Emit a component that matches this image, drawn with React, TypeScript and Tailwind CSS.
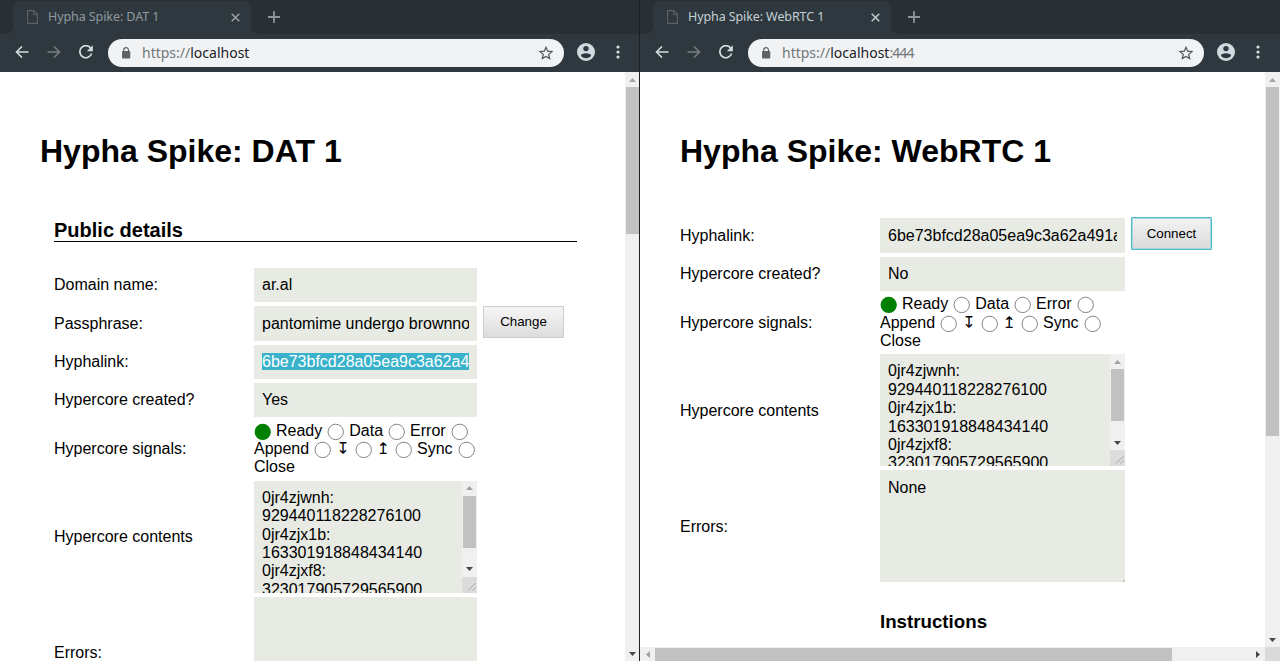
import type { ReactNode } from 'react';

function TabCurve({ flip }: { flip?: boolean }) {
  return (
    <svg width="8" height="8" viewBox="0 0 8 8" className={flip ? 'self-end -scale-x-100' : 'self-end'}>
      <path d="M8 0v8H0c4.400 0 8-3.600 8-8z" fill="#2e383e" />
    </svg>
  );
}

function BrowserChrome({ title, port, active }: { title: string; port?: string; active?: boolean }) {
  return (
    <header className="shrink-0 font-['Noto_Sans','Open_Sans',sans-serif]">
      <div className="flex h-[34px] bg-[#283036] pl-[5px] pt-px">
        <TabCurve />
        <div className="flex w-[238px] items-center rounded-t-[7px] bg-[#2e383e] pb-px pl-[14px] pr-[11px]">
          <svg width="11" height="14" viewBox="0 0 11 14" fill="none" stroke="#5d6264" strokeWidth="1.1" className="shrink-0">
            <path d="M.6.6h6.100l3.700 3.700v9.100H.6zM6.500.6v3.900h3.900" />
          </svg>
          <span
            className={
              active
                ? 'ml-[10px] flex-1 whitespace-nowrap text-[12.5px] leading-[18px] tracking-[-0.1px] text-[#c5d0d5]'
                : 'ml-[10px] flex-1 whitespace-nowrap text-[12.5px] leading-[18px] tracking-[-0.08px] text-[#8f999e]'
            }
          >
            {title}
          </span>
          <svg width="9" height="9" viewBox="0 0 9 9" stroke={active ? '#c2cbd0' : '#9ba3a7'} strokeWidth="1.500">
            <path d="M.7.7l7.600 7.600M8.300.7L.7 8.300" />
          </svg>
        </div>
        <TabCurve flip />
        <svg width="12" height="12" viewBox="0 0 12 12" stroke="#8d9599" strokeWidth="1.800" className="ml-[9px] mt-[10px]">
          <path d="M6 0v12M0 6h12" />
        </svg>
      </div>
      <div className="flex h-[38px] items-center bg-[#2e383e] pl-[15px]">
        <svg width="14" height="12" viewBox="0 0 14 12" fill="none" stroke="#d3dee3" strokeWidth="1.600" className="mb-[2px] shrink-0">
          <path d="M13.500 6H1.500M7 .5L1.500 6 7 11.500" />
        </svg>
        <svg width="14" height="12" viewBox="0 0 14 12" fill="none" stroke="#747d82" strokeWidth="1.600" className="mb-[2px] ml-[18px] shrink-0">
          <path d="M.5 6h12M7 .5L12.500 6 7 11.500" />
        </svg>
        <svg width="14" height="14" viewBox="0 0 14 14" fill="none" className="mb-[2px] ml-[18px] shrink-0">
          <path d="M11.600 3A6 6 0 1 0 12.600 8.500" stroke="#d3dee3" strokeWidth="1.700" />
          <path d="M13.800.2v6H7.800z" fill="#d3dee3" />
        </svg>
        <div className="ml-[15px] flex h-7 w-[456px] items-center rounded-full bg-[#f1f2f4] pl-[13px] pr-[11px]">
          <svg width="10" height="12" viewBox="0 0 10 12" className="shrink-0">
            <rect x="1" y="4" width="8.300" height="7.500" rx="1" fill="#5f6367" />
            <path d="M2.700 4.500V3a2.400 2.400 0 0 1 4.800 0v1.500" fill="none" stroke="#5f6367" strokeWidth="1.200" />
          </svg>
          <span className="ml-[11px] flex-1 whitespace-nowrap text-[14px] leading-[20px] text-[#73777a]">
            https://<span className="text-[#202326]">localhost</span>
            <span className="tracking-[-0.9px]">{port}</span>
          </span>
          <svg width="14" height="14" viewBox="0 0 14 14" fill="none" stroke="#505457" strokeWidth="1.200">
            <path d="M7 1.300l1.700 3.900 4.200.4-3.200 2.800 1 4.200L7 10.400l-3.700 2.200 1-4.200-3.200-2.800 4.200-.4z" />
          </svg>
        </div>
        <svg width="18" height="18" viewBox="0 0 18 18" className="mb-[2px] ml-[13px] shrink-0">
          <circle cx="9" cy="9" r="9" fill="#cfdbe1" />
          <circle cx="9" cy="5.600" r="2.700" fill="#2e383e" />
          <path d="M9 10.300c-2.800 0-5.200 1-5.200 2.300 1.100 1.700 3 2.700 5.200 2.700s4.100-1 5.200-2.700c0-1.300-2.400-2.300-5.200-2.300z" fill="#2e383e" />
        </svg>
        <svg width="4" height="14" viewBox="0 0 4 14" fill="#d3dee3" className="mb-[2px] ml-[21px] shrink-0">
          <circle cx="2" cy="2" r="1.600" />
          <circle cx="2" cy="7" r="1.600" />
          <circle cx="2" cy="12" r="1.600" />
        </svg>
      </div>
    </header>
  );
}

function Arrow({ dir, color }: { dir: 'up' | 'down' | 'left' | 'right'; color: string }) {
  const paths = {
    up: 'M3.500 0L7 4H0z',
    down: 'M3.500 4L7 0H0z',
    left: 'M0 3.500L4 0v7z',
    right: 'M4 3.500L0 0v7z',
  };
  const vertical = dir === 'up' || dir === 'down';
  return (
    <svg width={vertical ? 7 : 4} height={vertical ? 4 : 7} className="shrink-0" fill={color}>
      <path d={paths[dir]} />
    </svg>
  );
}

function VerticalScrollbar({ width, thumb }: { width: string; thumb: string }) {
  return (
    <div className={`${width} flex shrink-0 flex-col items-center bg-[#f0f0f0]`}>
      <div className="flex h-[15px] items-center">
        <Arrow dir="up" color="#a2a2a2" />
      </div>
      <div className={`${thumb} w-[13px] bg-[#c1c1c1]`} />
      <div className="mt-auto flex h-[15px] items-center">
        <Arrow dir="down" color="#484848" />
      </div>
    </div>
  );
}

function Row({ label, height, children }: { label: string; height: string; children: ReactNode }) {
  return (
    <div className={`${height} flex shrink-0`}>
      <div className="flex w-[200px] shrink-0 items-center pt-[0.800px]">{label}</div>
      {children}
    </div>
  );
}

function Field({ width, children }: { width: string; children?: ReactNode }) {
  return (
    <div className={`${width} flex h-full shrink-0 items-center bg-[#e8ebe4] px-2 pt-[0.800px]`}>
      <div className="w-full overflow-hidden whitespace-nowrap">{children}</div>
    </div>
  );
}

function Dot({ on }: { on?: boolean }) {
  return (
    <svg width="17" height="18" viewBox="0 0 17 18" className="mr-[5px] shrink-0 overflow-visible">
      <circle cx="8.700" cy="9.900" r={on ? 8.1 : 7.7} fill={on ? '#008000' : '#fff'} stroke={on ? 'none' : '#858585'} />
    </svg>
  );
}

function Glyph({ children }: { children: string }) {
  return <span className="mr-[5px] w-[13.400px] text-center font-['DejaVu_Sans',sans-serif]">{children}</span>;
}

function Signals() {
  return (
    <div className="flex flex-col whitespace-nowrap pt-[0.500px]">
      <div className="flex h-[18.400px]">
        <Dot on />
        <span className="mr-[5px]">Ready</span>
        <Dot />
        <span className="mr-[5px]">Data</span>
        <Dot />
        <span className="mr-[5px]">Error</span>
        <Dot />
      </div>
      <div className="flex h-[18.400px]">
        <span className="mr-[5px]">Append</span>
        <Dot />
        <Glyph>↧</Glyph>
        <Dot />
        <Glyph>↥</Glyph>
        <Dot />
        <span className="mr-[5px]">Sync</span>
        <Dot />
      </div>
      <div className="h-[18.400px]">Close</div>
    </div>
  );
}

const entries = [
  ['0jr4zjwnh:', '929440118228276100'],
  ['0jr4zjx1b:', '163301918848434140'],
  ['0jr4zjxf8:', '323017905729565900'],
];

function Contents({ width }: { width: string }) {
  return (
    <div className={`${width} flex h-full shrink-0 overflow-hidden bg-[#e8ebe4]`}>
      <div className="flex-1 px-2 pt-2">
        {entries.map(([key, value]) => (
          <div key={key}>
            <div>{key}</div>
            <div>{value}</div>
          </div>
        ))}
      </div>
      <div className="flex w-[15px] flex-col">
        <div className="flex h-[96px]">
          <VerticalScrollbar width="w-[15px]" thumb="h-[52px]" />
        </div>
        <svg width="15" height="16" className="bg-[#dcdcdc]" stroke="#a8a8a8">
          <path d="M6 13.500L13.500 6M10.500 13.500l3-3" />
        </svg>
      </div>
    </div>
  );
}

function Button({ focused, children }: { focused?: boolean; children: ReactNode }) {
  return (
    <button
      className={
        focused
          ? '-mt-px ml-[6px] h-[33px] w-[81px] rounded-[1px] border border-[#4bbacb] bg-linear-to-b from-[#f3f3f3] to-[#dadada] text-[13.333px] leading-4 shadow-[inset_0_0_0_1px_#a6d7df]'
          : 'ml-[6px] h-[32px] w-[81px] border border-[#cdcdcd] bg-linear-to-b from-[#f5f5f5] to-[#dddddd] text-[13.333px] leading-4'
      }
    >
      {children}
    </button>
  );
}

export default function App() {
  return (
    <div className="flex h-[661px] w-[1280px] overflow-hidden bg-white font-['Liberation_Sans',Arial,sans-serif] text-[16px] leading-[18.400px] text-black">
      <section className="flex w-[640px] flex-col border-r border-[#1c2022]">
        <BrowserChrome title="Hypha Spike: DAT 1" />
        <div className="flex min-h-0 flex-1">
          <main className="flex w-[625px] flex-col overflow-hidden pl-10 pt-[61px]">
            <h1 className="shrink-0 text-[32px] font-bold leading-[37px]">Hypha Spike: DAT 1</h1>
            <div className="ml-[14px] mt-12 flex flex-col">
              <h2 className="w-[523px] border-b border-black pt-px text-[20px] font-bold leading-[22px]">Public details</h2>
              <div className="mt-[26px] flex flex-col gap-1">
                <Row label="Domain name:" height="h-[34.300px]">
                  <Field width="w-[223px]">ar.al</Field>
                </Row>
                <Row label="Passphrase:" height="h-[34.300px]">
                  <Field width="w-[223px]">pantomime undergo brownnose</Field>
                  <Button>Change</Button>
                </Row>
                <Row label="Hyphalink:" height="h-[34.300px]">
                  <Field width="w-[223px]">
                    <span className="bg-[#3ab2cb] pt-px text-white">6be73bfcd28a05ea9c3a62a491a</span>
                  </Field>
                </Row>
                <Row label="Hypercore created?" height="h-[34.300px]">
                  <Field width="w-[223px]">Yes</Field>
                </Row>
                <Row label="Hypercore signals:" height="h-[55.500px]">
                  <Signals />
                </Row>
                <Row label="Hypercore contents" height="h-[112px]">
                  <Contents width="w-[223px]" />
                </Row>
                <Row label="Errors:" height="h-[112px]">
                  <Field width="w-[223px]" />
                </Row>
              </div>
            </div>
          </main>
          <VerticalScrollbar width="w-[14px]" thumb="h-[147px]" />
        </div>
      </section>
      <section className="flex w-[640px] flex-col">
        <BrowserChrome title="Hypha Spike: WebRTC 1" port=":444" active />
        <div className="flex min-h-0 flex-1">
          <main className="flex w-[625px] flex-col overflow-hidden pl-10 pt-[61px]">
            <h1 className="shrink-0 text-[32px] font-bold leading-[37px]">Hypha Spike: WebRTC 1</h1>
            <div className="mt-[48.300px] flex flex-col gap-1">
              <Row label="Hyphalink:" height="h-[34.300px]">
                <Field width="w-[245px]">6be73bfcd28a05ea9c3a62a491a</Field>
                <Button focused>Connect</Button>
              </Row>
              <Row label="Hypercore created?" height="h-[34.300px]">
                <Field width="w-[245px]">No</Field>
              </Row>
              <Row label="Hypercore signals:" height="h-[55.500px]">
                <Signals />
              </Row>
              <Row label="Hypercore contents" height="h-[112px]">
                <Contents width="w-[245px]" />
              </Row>
              <Row label="Errors:" height="h-[112px]">
                <div className="flex w-[245px] justify-between bg-[#e8ebe4] pl-2 pt-[8.500px]">
                  None
                  <span className="size-[2px] self-end bg-[#c3c6bf]" />
                </div>
              </Row>
            </div>
            <h3 className="ml-[200px] mt-[28.700px] text-[18.720px] font-bold leading-[21px]">Instructions</h3>
          </main>
          <VerticalScrollbar width="w-[15px]" thumb="h-[349px]" />
        </div>
        <div className="flex h-[14px] shrink-0 bg-[#f0f0f0]">
          <div className="flex w-[15px] items-center justify-center">
            <Arrow dir="left" color="#a2a2a2" />
          </div>
          <div className="mt-px w-[517px] bg-[#c1c1c1]" />
          <div className="ml-auto flex w-[15px] items-center justify-center">
            <Arrow dir="right" color="#484848" />
          </div>
          <div className="w-[15px] bg-[#dadada]" />
        </div>
      </section>
    </div>
  );
}
